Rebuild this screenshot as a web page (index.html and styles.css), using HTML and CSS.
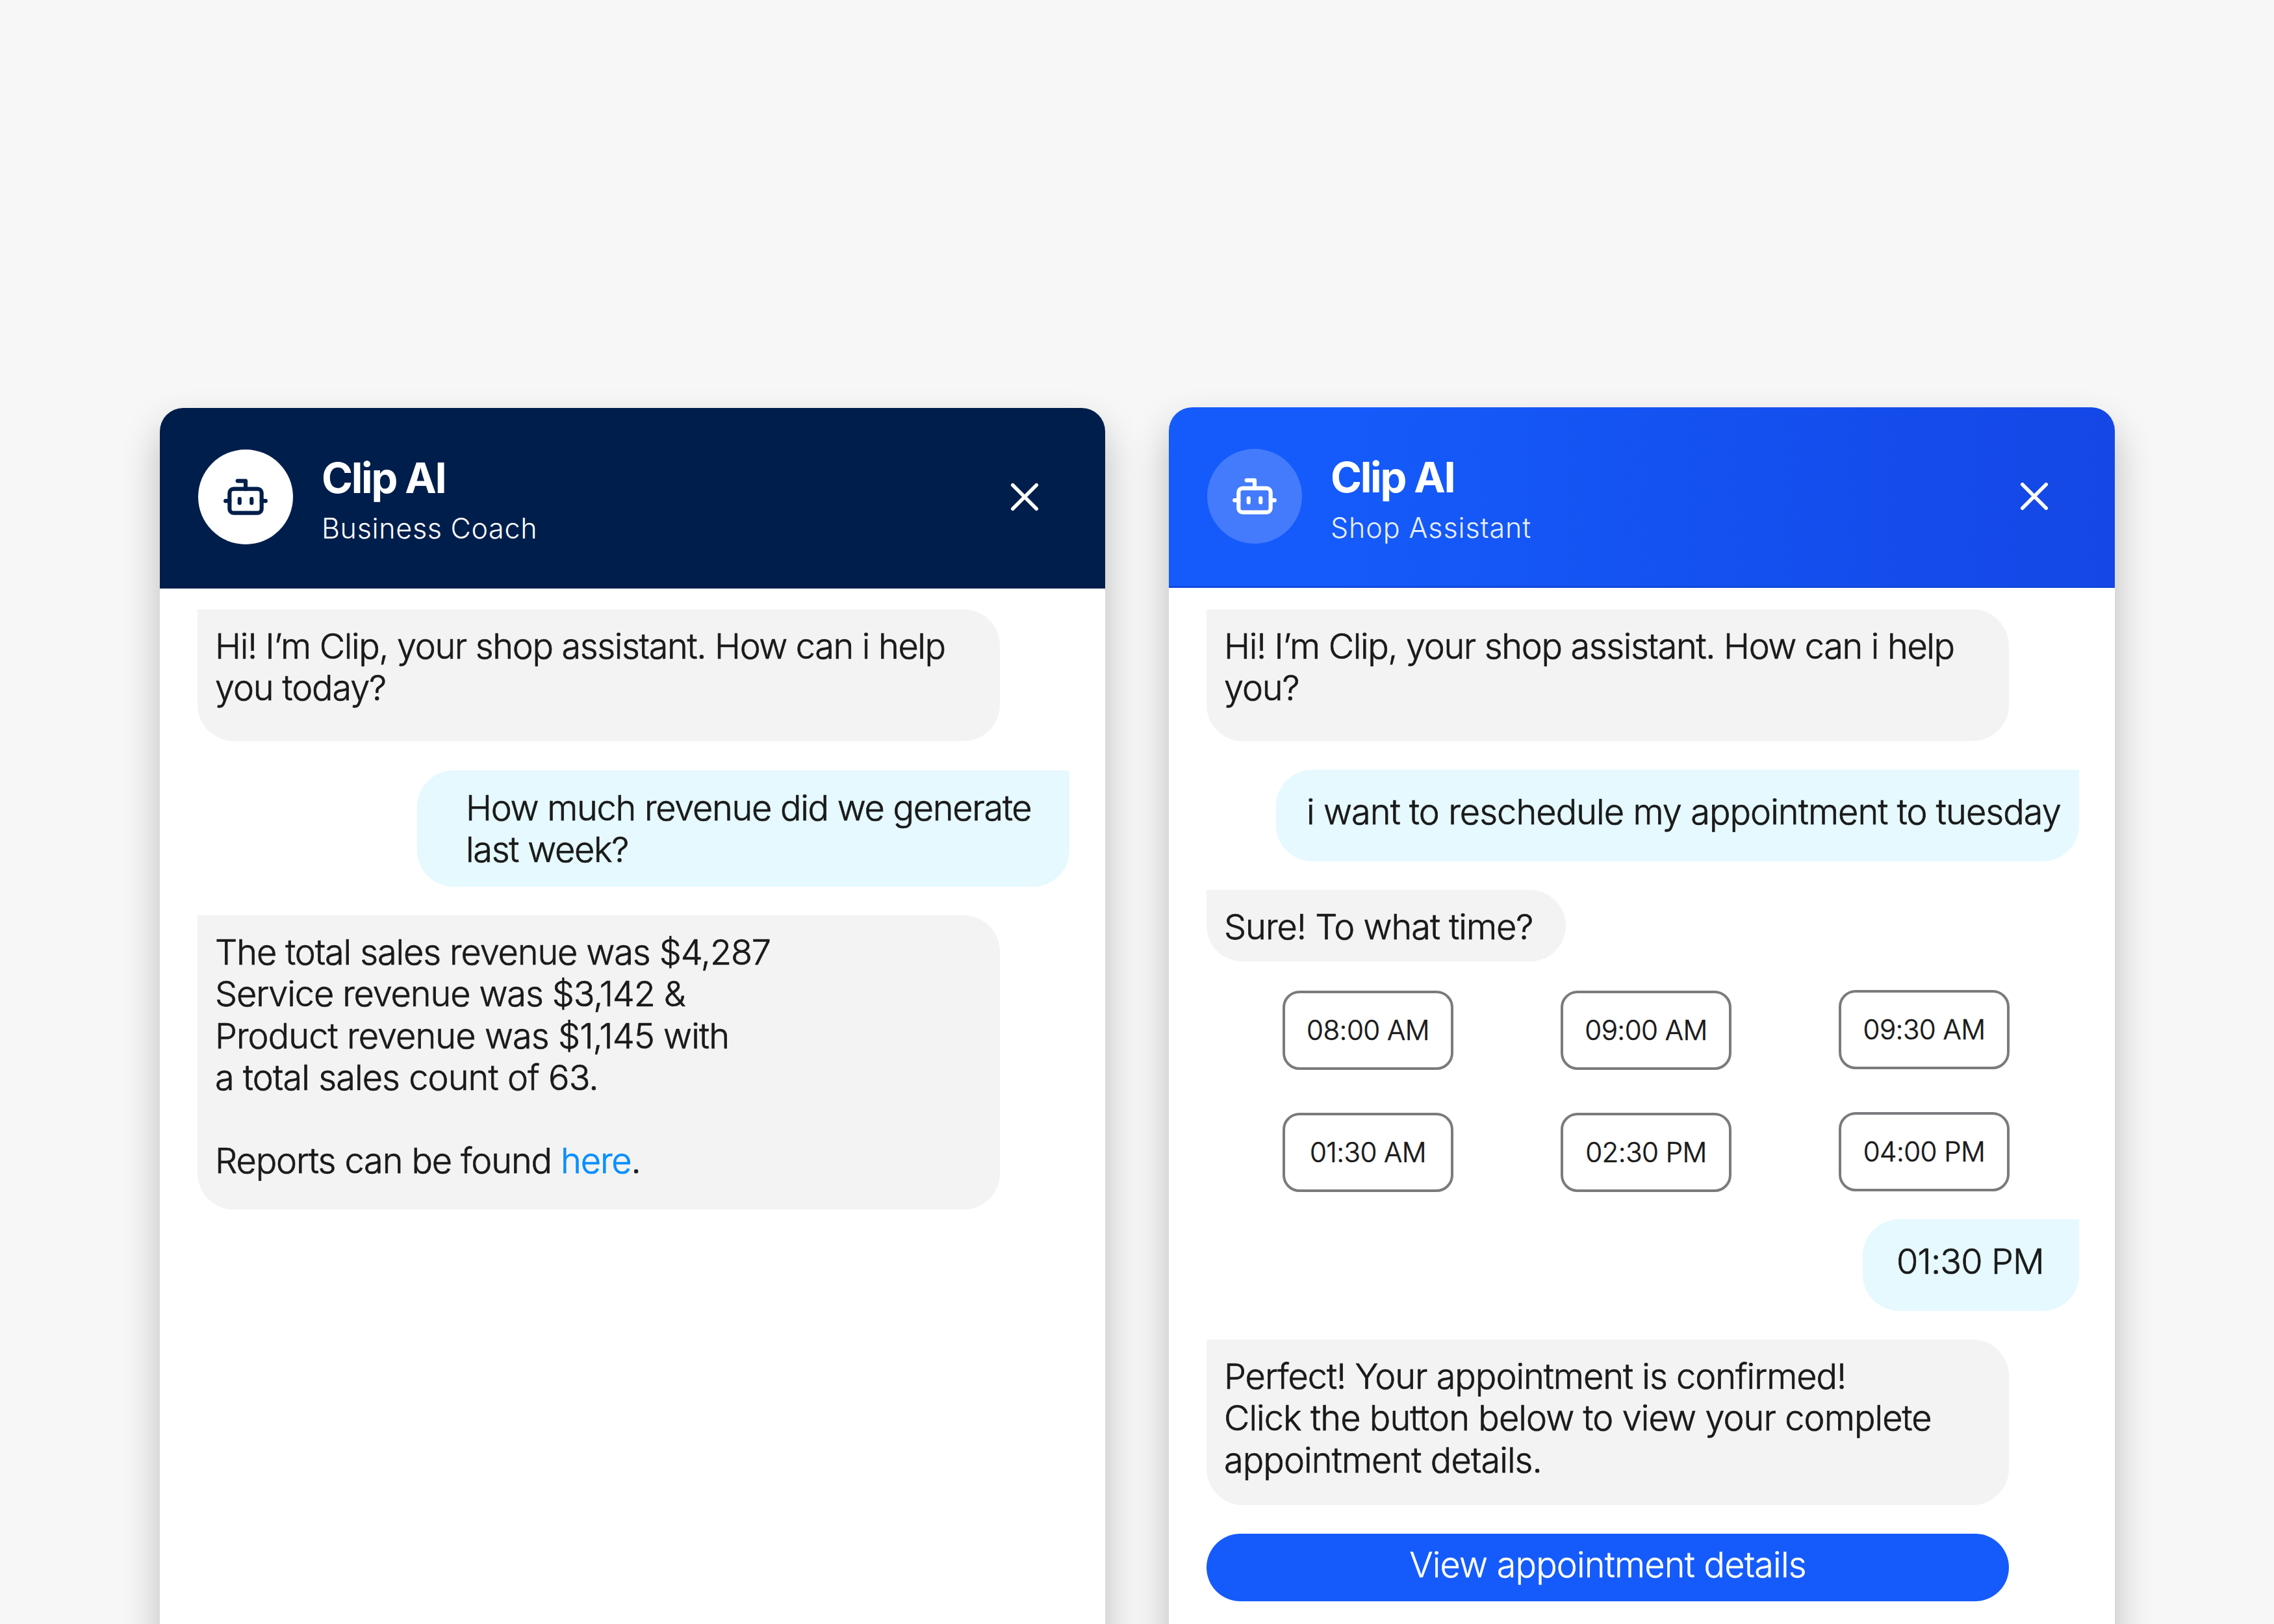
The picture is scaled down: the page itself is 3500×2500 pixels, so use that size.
FILE: index.html
```html
<!DOCTYPE html>
<html lang="en">
<head>
<meta charset="utf-8">
<title>Clip AI</title>
<link rel="stylesheet" href="styles.css">
</head>
<body>
<main class="stage">
  <section class="panel">
    <header class="head head-navy">
      <div class="avatar avatar-white">
        <svg class="bot" viewBox="0 0 24 24"><path d="M12 8V4H8"/><rect x="4" y="8" width="16" height="12" rx="2"/><path d="M2 14h2M20 14h2M15 13v2M9 13v2"/></svg>
      </div>
      <div class="names"><h1 class="title">Clip AI</h1><p class="subtitle coach">Business Coach</p></div>
      <svg class="close" viewBox="0 0 44 44"><path d="M3.75 3.75L40.25 40.25M40.25 3.75L3.75 40.25"/></svg>
    </header>
    <div class="chat">
      <div class="bubble bot-msg greeting"><span class="snug">Hi! I’m Clip, your shop assistant. How can i help</span><br>you today?</div>
      <div class="bubble user-msg question">How much revenue did we generate<br>last week?</div>
      <div class="bubble bot-msg report">The total sales revenue was $4,287<br>Service revenue was $3,142 &amp;<br><span class="loose">Product revenue was $1,145 with<br>a total sales count of 63.</span><br><br>Reports can be found <a class="link">here</a>.</div>
    </div>
  </section>
  <section class="panel panel-shop">
    <header class="head head-blue">
      <div class="avatar avatar-tint">
        <svg class="bot" viewBox="0 0 24 24"><path d="M12 8V4H8"/><rect x="4" y="8" width="16" height="12" rx="2"/><path d="M2 14h2M20 14h2M15 13v2M9 13v2"/></svg>
      </div>
      <div class="names"><h1 class="title">Clip AI</h1><p class="subtitle">Shop Assistant</p></div>
      <svg class="close" viewBox="0 0 44 44"><path d="M3.75 3.75L40.25 40.25M40.25 3.75L3.75 40.25"/></svg>
    </header>
    <div class="chat chat-shop">
      <div class="bubble bot-msg greeting"><span class="snug">Hi! I’m Clip, your shop assistant. How can i help</span><br>you?</div>
      <div class="bubble user-msg request">i want to reschedule my appointment to tuesday</div>
      <div class="bubble bot-msg ask">Sure! To what time?</div>
      <div class="slots">
        <div class="slot">08:00 AM</div><div class="slot">09:00 AM</div><div class="slot slot-end">09:30 AM</div>
        <div class="slot">01:30 AM</div><div class="slot">02:30 PM</div><div class="slot slot-end">04:00 PM</div>
      </div>
      <div class="bubble user-msg picked">01:30 PM</div>
      <div class="bubble bot-msg confirm">Perfect! Your appointment is confirmed!<br><span class="loose">Click the button below to view your complete<br>appointment details.</span></div>
      <div class="cta">View appointment details</div>
    </div>
  </section>
</main>
</body>
</html>
```
FILE: styles.css
```css
* { box-sizing: border-box; }
body { margin: 0; background: #f7f7f7; font-family: Inter, "Liberation Sans", sans-serif; color: #1a1a1a; }
.stage { height: 2500px; overflow: hidden; display: flex; gap: 98px; padding: 628px 0 0 246px; }
.panel { width: 1455px; height: 2000px; flex: none; background: #fff; border-radius: 36px 36px 0 0; box-shadow: 0 30px 60px rgba(0, 5, 15, .24); }
.panel-shop { width: 1456px; margin-top: -1px; }
.head { height: 278px; border-radius: 36px 36px 0 0; display: flex; align-items: center; padding: 0 102px 5px 59px; color: #fff; }
.head-navy { background: #001e4b; }
.head-blue { background: linear-gradient(90deg, #155bfb 0%, #155bfb 15%, #1447e6 100%); box-shadow: inset 0 -3px #1148dc; }
.avatar { width: 146px; height: 146px; border-radius: 50%; display: flex; align-items: center; justify-content: center; }
.avatar-white { background: #fff; color: #001e4b; }
.avatar-tint { background: #447bfc; }
.bot { width: 74px; height: 74px; margin-right: 1px; fill: none; stroke: currentColor; stroke-width: 2; stroke-linecap: round; stroke-linejoin: round; }
.names { margin-left: 44px; padding-top: 18px; flex: 1; }
.title { margin: 0; font-size: 65px; line-height: 78px; font-weight: 700; letter-spacing: -2.3px; }
.subtitle { margin: 0; font-size: 43px; line-height: 76px; font-weight: 300; letter-spacing: .9px; color: #e8f0ff; }
.coach { color: #fff; letter-spacing: .7px; }
.close { width: 44px; height: 44px; fill: none; stroke: #fff; stroke-width: 5.5; stroke-linecap: round; }
.chat { display: flex; flex-direction: column; align-items: flex-start; padding: 32px 55px 0 58px; gap: 44px; }
.chat-shop { padding-top: 33px; }
.bubble { font-size: 54px; line-height: 64.3px; font-weight: 300; letter-spacing: -1.1px; -webkit-text-stroke: .7px currentColor; white-space: nowrap; flex: none; }
.bot-msg { background: #f3f3f3; border-radius: 0 56px 56px 56px; padding: 25px 0 0 27px; width: 1235px; }
.user-msg { background: #e5f9ff; border-radius: 56px 0 56px 56px; align-self: flex-end; }
.greeting { height: 203px; }
.snug { letter-spacing: -1.34px; }
.loose { letter-spacing: -.9px; }
.question { width: 1004px; height: 179px; margin-top: 1px; padding: 26px 0 0 75px; letter-spacing: -1.26px; }
.report { height: 453px; }
.link { color: #0a8fff; }
.request { width: 1236px; height: 141px; padding: 33px 0 0 47px; letter-spacing: -.92px; }
.ask { width: 553px; height: 110px; letter-spacing: -1px; }
.slots { display: grid; grid-template-columns: repeat(3, 263px); column-gap: 165px; row-gap: 66px; margin: 1px 0 -2px 117px; }
.slot { height: 122px; border: 4px solid #7a7b7d; border-radius: 26px; font-size: 42px; font-weight: 300; letter-spacing: -.55px; -webkit-text-stroke: .6px currentColor; padding-bottom: 1px; display: flex; align-items: center; justify-content: center; white-space: nowrap; }
.slot-end { margin-top: -1px; margin-bottom: 1px; }
.picked { width: 333px; height: 141px; padding: 33px 0 0 52px; letter-spacing: -.85px; }
.confirm { height: 255px; letter-spacing: -1px; }
.cta { width: 1235px; height: 104px; border-radius: 52px; background: #155bfb; color: #fff; font-size: 54px; line-height: 96px; font-weight: 300; letter-spacing: -.82px; -webkit-text-stroke: .4px currentColor; text-align: center; }
```
